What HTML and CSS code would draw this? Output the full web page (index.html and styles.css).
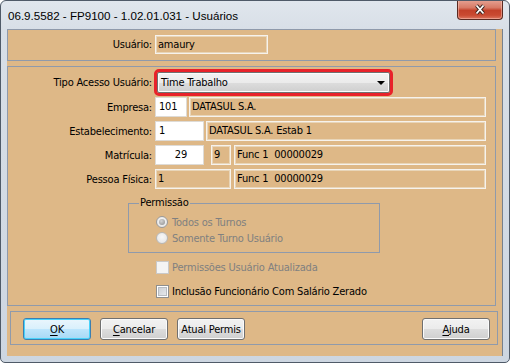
FILE: index.html
```html
<!DOCTYPE html>
<html lang="pt">
<head>
    <meta charset="UTF-8">
    <title>Usuários</title>
    <link rel="stylesheet" href="styles.css">
</head>
<body>
    <div class="window">
        <!-- Title bar -->
        <div class="titlebar">
            <span class="title">06.9.5582 - FP9100 - 1.02.01.031 - Usuários</span>
            <button class="close" type="button">
                <svg width="12" height="11" viewBox="0 0 12 11">
                    <path d="M2.5 1.5 L9.5 9.5 M9.5 1.5 L2.5 9.5" stroke="#3b2520" stroke-width="3.6" fill="none"/>
                    <path d="M2.5 1.5 L9.5 9.5 M9.5 1.5 L2.5 9.5" stroke="#ffffff" stroke-width="1.8" fill="none"/>
                </svg>
            </button>
        </div>

        <div class="client">
            <!-- User -->
            <div class="rect rect-user">
                <div class="row">
                    <span class="lbl">Usuário:</span>
                    <div class="fld dis" style="width: 113px;">amaury</div>
                </div>
            </div>

            <!-- Main data -->
            <div class="rect rect-main">
                <div class="row row-combo">
                    <span class="lbl">Tipo Acesso Usuário:</span>
                    <div class="combo">
                        <span>Time Trabalho</span>
                        <span class="arrow"></span>
                    </div>
                </div>
                <div class="row">
                    <span class="lbl">Empresa:</span>
                    <div class="fld in" style="width: 32px;">101</div>
                    <div class="fld dis gap2" style="width: 297px;">DATASUL S.A.</div>
                </div>
                <div class="row">
                    <span class="lbl">Estabelecimento:</span>
                    <div class="fld in" style="width: 49px;">1</div>
                    <div class="fld dis gap2" style="width: 280px;">DATASUL S.A. Estab 1</div>
                </div>
                <div class="row">
                    <span class="lbl">Matrícula:</span>
                    <div class="fld in num" style="width: 49px;">29</div>
                    <div class="fld dis gap7" style="width: 20px;">9</div>
                    <div class="fld dis" style="width: 252px;">Func 1&nbsp; 00000029</div>
                </div>
                <div class="row">
                    <span class="lbl">Pessoa Física:</span>
                    <div class="fld dis" style="width: 76px;">1</div>
                    <div class="fld dis" style="width: 252px;">Func 1&nbsp; 00000029</div>
                </div>

                <div class="group">
                    <span class="legend">Permissão</span>
                    <div class="opt"><span class="radio on"></span>Todos os Turnos</div>
                    <div class="opt"><span class="radio"></span>Somente Turno Usuário</div>
                </div>

                <div class="check check-dis"><span class="box"></span>Permissões Usuário Atualizada</div>
                <div class="check check-on"><span class="box"></span>Inclusão Funcionário Com Salário Zerado</div>
            </div>

            <!-- Buttons -->
            <div class="rect rect-btns">
                <div class="btn-group">
                    <button class="btn btn-default" type="button"><u>O</u>K</button>
                    <button class="btn" type="button"><u>C</u>ancelar</button>
                    <button class="btn" type="button">Atual Permis</button>
                </div>
                <button class="btn" type="button"><u>A</u>juda</button>
            </div>
        </div>
    </div>
</body>
</html>
```

FILE: styles.css
```css
body {
    margin: 0;
    font-family: "DejaVu Sans Condensed", "Liberation Sans", sans-serif;
    font-size: 11px;
    letter-spacing: -0.2px;
    color: #000;
}

.window {
    width: 510px;
    height: 363px;
    box-sizing: border-box;
    border: 1px solid #4f5a68;
    border-radius: 6px 6px 5px 5px;
    padding: 0 6px 6px 6px;
    background: linear-gradient(to bottom, #e0e6ed 0px, #d8dfe7 28px, #cdd6e1 100%);
    display: flex;
    flex-direction: column;
    overflow: hidden;
}

/* Title bar */
.titlebar {
    height: 28px;
    display: flex;
    justify-content: space-between;
    align-items: flex-start;
    flex-shrink: 0;
}

.title {
    padding: 8px 0 0 1px;
    font-family: "Liberation Sans", sans-serif;
    font-size: 11.6px;
    letter-spacing: 0;
    line-height: 14px;
}

.close {
    width: 46px;
    height: 20px;
    margin-top: -1px;
    padding: 0;
    border: 1px solid #5a2a22;
    border-top: none;
    border-radius: 0 0 4px 4px;
    background: linear-gradient(to bottom, #e6a394 0%, #d77a66 40%, #c3412a 55%, #c94a32 80%, #dc7660 100%);
    box-shadow: inset 0 0 0 1px rgba(255, 210, 200, 0.45);
    display: flex;
    align-items: center;
    justify-content: center;
}

/* Client area */
.client {
    flex: 1;
    background: #deb887;
    border-right: 1px solid #76818f;
}

.rect {
    border: 1px solid #8f9aab;
    box-sizing: border-box;
}

.rect-user {
    width: 489px;
    height: 32px;
    padding-top: 5px;
}

.rect-main {
    width: 489px;
    height: 240px;
    margin-top: 5px;
    padding-top: 5px;
}

.rect-btns {
    width: 488px;
    height: 34px;
    margin: 5px 0 0 3px;
    padding: 6px 7px 0 12px;
    display: flex;
    justify-content: space-between;
    align-items: flex-start;
}

/* Rows */
.row {
    display: flex;
    align-items: center;
    margin-top: 4px;
}

.rect-user .row,
.row-combo {
    margin-top: 0;
}

.lbl {
    width: 144px;
    margin-right: 3px;
    text-align: right;
    white-space: nowrap;
}

.fld {
    height: 20px;
    box-sizing: border-box;
    padding: 0 2px;
    line-height: 18px;
    border: 1px solid #ece7df;
    white-space: nowrap;
    overflow: hidden;
}

.rect-user .fld {
    height: 19px;
    line-height: 17px;
}

.fld.in {
    background: #fff;
    border-color: #dedbd6;
    padding-left: 3px;
}

.fld.dis {
    border-color: #f6f2ec;
    box-shadow: inset 0 0 0 1px #e8d5b8;
    margin-left: 3px;
}

.rect-user .fld.dis,
.row .lbl + .fld.dis {
    margin-left: 0;
}

.fld.gap2 {
    margin-left: 2px;
}

.fld.gap7 {
    margin-left: 7px;
}

.fld.num {
    text-align: right;
    padding-right: 16px;
}

/* Combo */
.combo {
    width: 233px;
    height: 21px;
    box-sizing: border-box;
    margin-left: 2px;
    padding: 0 4px 0 3px;
    border: 1px solid #707070;
    border-radius: 2px;
    outline: 3px solid #e8222a;
    background: linear-gradient(to bottom, #f2f2f2 0%, #ebebeb 50%, #dddddd 50%, #cfcfcf 100%);
    box-shadow: inset 0 0 0 1px #fcfcfc;
    display: flex;
    align-items: center;
    justify-content: space-between;
}

.arrow {
    width: 0;
    height: 0;
    border-left: 4px solid transparent;
    border-right: 4px solid transparent;
    border-top: 4px solid #000;
}

/* Group box */
.group {
    position: relative;
    width: 252px;
    height: 50px;
    box-sizing: border-box;
    margin: 14px 0 0 120px;
    padding: 10px 0 0 27px;
    border: 1px solid #8f9aab;
}

.legend {
    position: absolute;
    top: -8px;
    left: 10px;
    padding: 0 1px;
    background: #deb887;
    line-height: 14px;
}

.opt {
    height: 16px;
    display: flex;
    align-items: center;
    color: #808080;
}

.radio {
    width: 12px;
    height: 12px;
    box-sizing: border-box;
    margin-right: 4px;
    border: 1px solid #b7b7b7;
    border-radius: 50%;
    background: radial-gradient(circle at 50% 40%, #f7f7f7, #e2e2e2);
    display: flex;
    align-items: center;
    justify-content: center;
}

.radio.on {
    border-color: #9a9a9a;
}

.radio.on::after {
    content: "";
    width: 6px;
    height: 6px;
    border-radius: 50%;
    background: radial-gradient(circle at 40% 35%, #d4d4d4, #8c8c8c);
}

/* Checkboxes */
.check {
    height: 16px;
    display: flex;
    align-items: center;
    margin-left: 148px;
}

.check-dis {
    margin-top: 6px;
    color: #808080;
}

.check-on {
    margin-top: 8px;
}

.box {
    width: 13px;
    height: 13px;
    box-sizing: border-box;
    margin-right: 3px;
    border: 1px solid #c9c9c9;
    background: #f4f4f4;
}

.check-on .box {
    border-color: #8e8f8f;
    background: linear-gradient(135deg, #c6cad0 0%, #eceef0 100%);
    box-shadow: inset 0 0 0 1px #fff, inset 0 0 0 2px #b8bcc2;
}

/* Buttons */
.btn-group {
    display: flex;
    gap: 9px;
}

.btn {
    width: 68px;
    height: 22px;
    padding: 0;
    box-sizing: border-box;
    font-family: inherit;
    font-size: 11px;
    letter-spacing: -0.2px;
    color: #000;
    border: 1px solid #707070;
    border-radius: 3px;
    background: linear-gradient(to bottom, #f2f2f2 0%, #ebebeb 50%, #dddddd 50%, #cfcfcf 100%);
    box-shadow: inset 0 0 0 1px #fbfbfb;
}

.btn-default {
    border-color: #3c7fb1;
    background: linear-gradient(to bottom, #eaf6fd 0%, #d9f0fc 50%, #bee6fd 50%, #a7d9f5 100%);
    box-shadow: inset 0 0 0 1px #48d3fb;
}

.btn u {
    text-decoration-thickness: 1px;
    text-underline-offset: 2px;
}
```
